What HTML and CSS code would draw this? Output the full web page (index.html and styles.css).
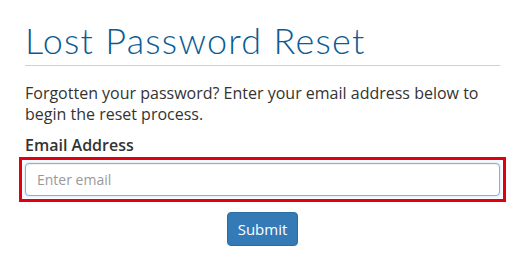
FILE: index.html
```html
<!DOCTYPE html>
<html>
<head>
<meta charset="utf-8">
<link rel="stylesheet" href="styles.css">
</head>
<body>
<div class="container">
  <h1 class="title">Lost Password Reset</h1>
  <p class="intro">Forgotten your password? Enter your email address below to begin the reset process.</p>
  <form class="form">
    <label class="label" for="email">Email Address</label>
    <div class="field">
      <input class="input" id="email" type="email" placeholder="Enter email">
    </div>
    <div class="actions">
      <button class="btn" type="button">Submit</button>
    </div>
  </form>
</div>
</body>
</html>
```

FILE: styles.css
```css
* { box-sizing: border-box; }
html, body { margin: 0; padding: 0; background: #fff; }
body {
  font-family: "Open Sans", "Liberation Sans", sans-serif;
  color: #333;
}
.container {
  width: 475px;
  margin-left: 25px;
  padding-top: 20px;
}
.title {
  margin: 0;
  font-family: "Lato", "Open Sans", sans-serif;
  font-weight: 300;
  font-size: 36px;
  letter-spacing: 1.25px;
  line-height: 40px;
  color: #0b5b92;
  padding-bottom: 5px;
  border-bottom: 1px solid #d0d0d0;
}
.intro {
  margin: 17px 0 0;
  font-size: 16px;
  line-height: 21px;
  color: #333;
}
.form { margin-top: 9px; display: flex; flex-direction: column; }
.label {
  font-weight: 600;
  font-size: 16px;
  line-height: 22px;
  color: #333;
}
.field {
  margin-top: 1px;
  padding: 3px;
  margin-left: -6px;
  margin-right: -6px;
  border: 3px solid #e00012;
}
.input {
  display: block;
  width: 100%;
  height: 33px;
  border: 1px solid #7cb6e8;
  border-radius: 4px;
  box-shadow: inset 0 1px 1px rgba(0,0,0,.06), 0 0 3px rgba(102,175,233,.5);
  padding: 0 11px;
  font-family: "Open Sans", sans-serif;
  font-size: 14px;
  color: #555;
  outline: none;
}
.input::placeholder { color: #999; }
.actions {
  display: flex;
  justify-content: center;
  margin-top: 10px;
}
.btn {
  width: 71px;
  height: 34px;
  background: #337ab7;
  border: 1px solid #2e6da4;
  border-radius: 4px;
  color: #fff;
  font-family: "Open Sans", sans-serif;
  font-size: 15px;
  padding: 0;
}
```
